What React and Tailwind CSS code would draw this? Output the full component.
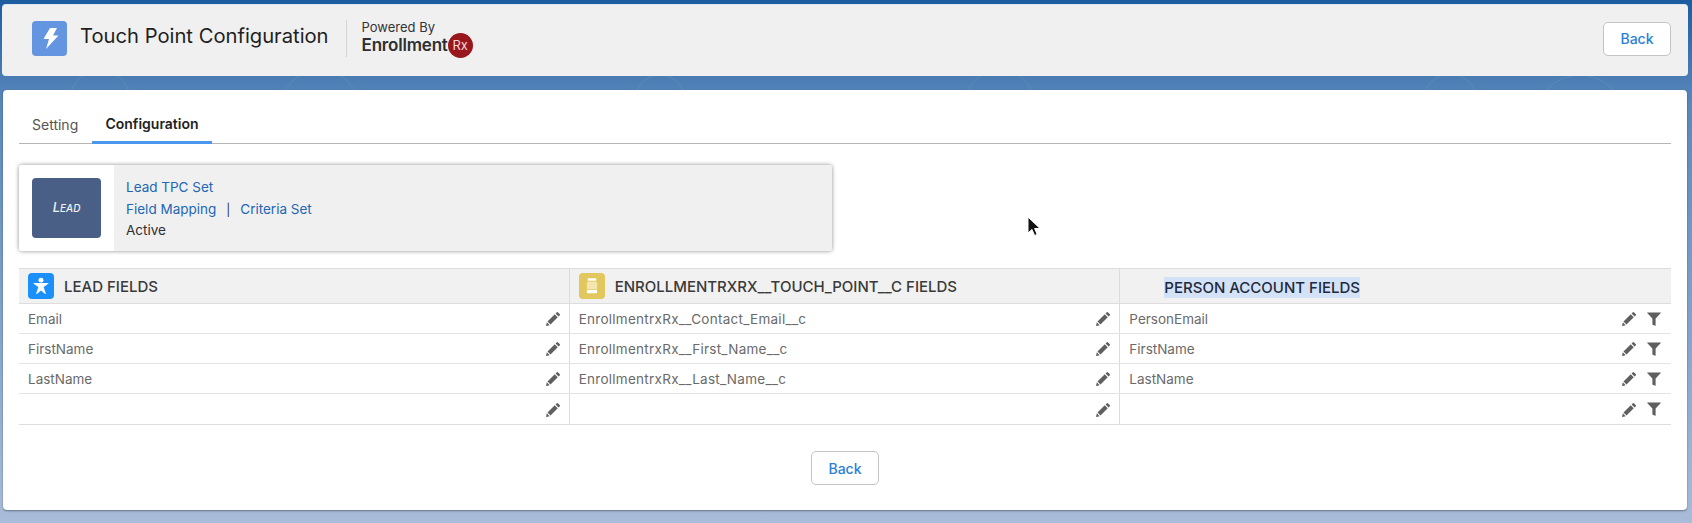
import React from 'react';

const rows = [
    ['Email', 'EnrollmentrxRx__Contact_Email__c', 'PersonEmail'],
    ['FirstName', 'EnrollmentrxRx__First_Name__c', 'FirstName'],
    ['LastName', 'EnrollmentrxRx__Last_Name__c', 'LastName'],
    ['', '', ''],
];

const PencilIcon = () => (
    <svg className="w-[15px] h-[15px] shrink-0" viewBox="0 0 16 16" fill="#5f5f5f">
        <path d="M11.6 1.200a.7.7 0 0 1 1 0l2.200 2.200a.7.7 0 0 1 0 1L13.400 5.800 10.200 2.600z" />
        <path d="M9.300 3.500l3.200 3.200-7.700 7.700-3.200-3.200z" />
        <path d="M.9 12.100L.1 15.400a.4.4 0 0 0 .5.5l3.300-.8z" />
    </svg>
);

const FilterIcon = () => (
    <svg className="w-[14px] h-[14px] shrink-0" viewBox="0 0 14 14" fill="#5f5f5f">
        <path d="M.4 .5h13.200c.3 0 .4.3.2.5L8.600 6.600v6.900c0 .3-.2.4-.4.3l-2.500-1.100a.4.4 0 0 1-.3-.4V6.600L.2 1C0 .8.100.5.4.5z" />
    </svg>
);

const BackButton = () => (
    <button className="w-[68px] h-[34px] bg-white border border-[#c4c4c4] rounded-[5px] text-[14px] font-medium text-[#2b80d6]">
        Back
    </button>
);

function HeaderCell({ icon, highlight, children }) {
    return (
        <div className="flex items-center pl-[9px] gap-[10px] border-r border-[#dcdcdc] last:border-r-0">
            {icon}
            <span className={`text-[15px] font-medium mt-[3px] ${highlight ? 'bg-[#d4e2f7] text-[#1e2a3c] ml-[35px] py-[3px] leading-[15px]' : 'text-[#3a3a3a]'}`}>
                {children}
            </span>
        </div>
    );
}

export default function App() {
    return (
        <div className="relative h-[523px] overflow-hidden bg-gradient-to-b from-[#1b5c9f] via-[#5a88bb] via-[20%] to-[#a9bcd9] px-[2px] pt-[4px] font-['Inter',sans-serif]">
            {/* Faint wallpaper lines */}
            <svg className="absolute left-0 top-0 w-full h-[90px]" viewBox="0 0 1692 90" fill="none" stroke="#ffffff" strokeOpacity="0.08">
                <circle cx="100" cy="100" r="30" />
                <circle cx="320" cy="110" r="40" />
                <circle cx="660" cy="100" r="25" />
                <circle cx="1000" cy="105" r="35" />
                <circle cx="1450" cy="100" r="26" />
                <circle cx="1580" cy="120" r="45" />
            </svg>

            {/* Page Header */}
            <div className="relative h-[72px] mr-[2px] bg-[#f0f0f1] rounded-[4px] flex items-center pl-[30px] pr-[17px] pb-[4px] border-t border-[#dbe6f2]">
                <div className="w-[35px] h-[35px] rounded-[4px] bg-[#6395e0] flex items-center justify-center">
                    <svg className="w-[20px] h-[23px]" viewBox="0 0 20 23" fill="#ffffff">
                        <path d="M10 1h7l-4 7.500h5.500L6 22l3-10H3.500z" />
                    </svg>
                </div>
                <h1 className="ml-[13px] -mt-[5px] text-[20.2px] text-[#1f1f1f] leading-none whitespace-nowrap">Touch Point Configuration</h1>
                <div className="w-px h-[37px] bg-[#d5d5d5] ml-[17px]"></div>
                <div className="ml-[15px]">
                    <div className="text-[13px] leading-[14px] text-[#333333]">Powered By</div>
                    <div className="flex items-center -mt-[1px]">
                        <span className="text-[17px] font-semibold leading-[18px] text-[#2f2f2f] tracking-[-0.2px]">Enrollment</span>
                        <span className="w-[25px] h-[25px] rounded-full bg-[#98161c] text-[#f3d7d7] text-[13px] leading-none flex items-center justify-center">Rx</span>
                    </div>
                </div>
                <div className="ml-auto">
                    <BackButton />
                </div>
            </div>

            {/* Main Card */}
            <div className="relative mt-[14px] ml-px mr-[3px] h-[420px] bg-white rounded-[4px] shadow-[0_1px_2px_rgba(0,0,0,0.4)] px-[16px] pt-[21px]">
                {/* Tabs */}
                <div className="flex items-end h-[33px] border-b border-[#b5b5b5] text-[14px]">
                    <div className="w-[73px] pl-[13px] h-full pt-[3px] text-[#555555]">Setting</div>
                    <div className="w-[120px] h-[34px] pt-[3px] -mb-px text-center font-semibold text-[#222222] border-b-[3px] border-[#4a97ee] rounded-b-[1px]">Configuration</div>
                </div>

                {/* Lead TPC Card */}
                <div className="mt-[21px] w-[813px] h-[86px] flex rounded-[3px] overflow-hidden shadow-[0_0_4px_rgba(0,0,0,0.45)]">
                    <div className="w-[95px] bg-white flex items-center pl-[13px]">
                        <div className="w-[69px] h-[60px] rounded-[4px] bg-[#4a5f86] flex items-center justify-center text-[#f0f0f0] italic font-medium text-[13px]">
                            L<span className="text-[10px]">EAD</span>
                        </div>
                    </div>
                    <div className="flex-1 bg-[#f0f0f1] pl-[12px] pt-[14px] text-[13.5px] text-[#2267b4]">
                        <div className="leading-[16px]">Lead TPC Set</div>
                        <div className="mt-[6px] leading-[16px]">
                            Field Mapping
                            <span className="text-[#333333] text-[12px] mx-[10px]">|</span>
                            Criteria Set
                        </div>
                        <div className="mt-[4px] leading-[16px] text-[#2f2f2f]">Active</div>
                    </div>
                </div>

                {/* Field Table */}
                <div className="mt-[17px] border-b border-[#dddddd]">
                    <div className="grid grid-cols-3 h-[36px] bg-[#f1f1f1] border-y border-[#dddddd]">
                        <HeaderCell icon={
                            <span className="w-[26px] h-[26px] rounded-[4px] bg-[#1b90fb] flex items-center justify-center">
                                <svg className="w-[16px] h-[18px]" viewBox="0 0 18 20" fill="#ffffff">
                                    <circle cx="9" cy="3.400" r="2.800" />
                                    <path d="M1 6.600h16c.5 0 .6.6.2.9L12 11l2.400 7.400c.2.6-.4.9-.8.5L9 15.200l-4.600 3.700c-.4.4-1 .1-.8-.5L6 11 .8 7.500c-.4-.3-.3-.9.2-.9z" />
                                </svg>
                            </span>
                        }>LEAD FIELDS</HeaderCell>
                        <HeaderCell icon={
                            <span className="w-[26px] h-[26px] rounded-[4px] bg-[#e2c75f] flex items-center justify-center">
                                <svg className="w-[12px] h-[18px]" viewBox="0 0 14 18" fill="#ffffff">
                                    <rect x="2" y="0" width="10" height="3" rx="1" />
                                    <rect x="1" y="4" width="12" height="8.500" fill="#f3e6ae" />
                                    <rect x="1" y="13.500" width="12" height="4" rx="1" />
                                </svg>
                            </span>
                        }>ENROLLMENTRXRX__TOUCH_POINT__C FIELDS</HeaderCell>
                        <HeaderCell highlight>PERSON ACCOUNT FIELDS</HeaderCell>
                    </div>
                    {rows.map((row, i) => (
                        <div key={i} className="grid grid-cols-3 h-[30px] border-b border-[#e4e4e4] last:border-b-0 text-[13.5px] text-[#6a6a6a]">
                            <div className="flex items-center pl-[9px] pr-[8px] border-r border-[#dcdcdc]">
                                <span className="mt-[1px]">{row[0]}</span>
                                <div className="ml-auto"><PencilIcon /></div>
                            </div>
                            <div className="flex items-center pl-[9px] pr-[8px] border-r border-[#dcdcdc]">
                                <span className="mt-[1px] tracking-[0.27px]">{row[1]}</span>
                                <div className="ml-auto"><PencilIcon /></div>
                            </div>
                            <div className="flex items-center pl-[9px] pr-[10px]">
                                <span className="mt-[1px]">{row[2]}</span>
                                <div className="ml-auto flex items-center gap-[10px]">
                                    <PencilIcon />
                                    <FilterIcon />
                                </div>
                            </div>
                        </div>
                    ))}
                </div>

                <div className="flex justify-center mt-[26px]">
                    <BackButton />
                </div>
            </div>

            {/* Mouse cursor */}
            <svg className="absolute left-[1027px] top-[216px] w-[14px] h-[22px]" viewBox="0 0 14 22">
                <path d="M1 1v16l4-3.500 2.600 6 2.600-1.100-2.600-5.900H13z" fill="#111111" stroke="#ffffff" strokeWidth="1" />
            </svg>
        </div>
    );
}
